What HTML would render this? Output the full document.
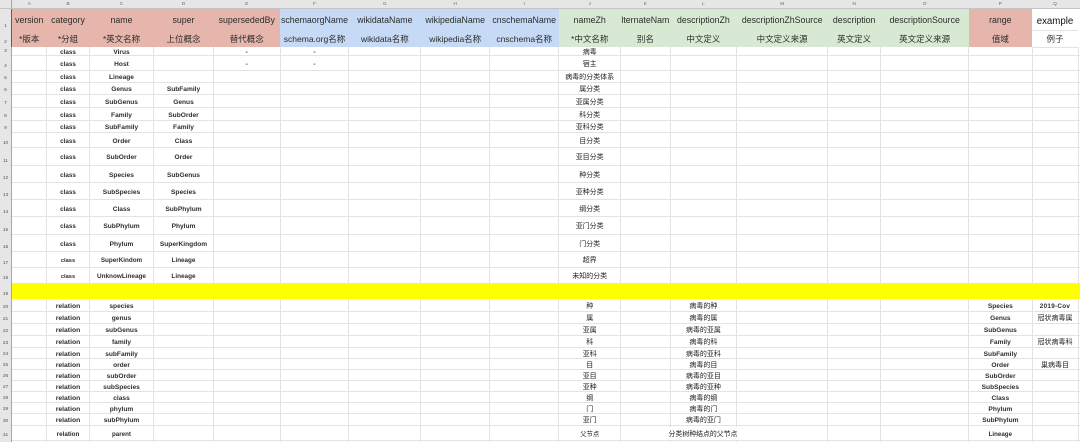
<!DOCTYPE html>
<html lang="zh">
<head>
<meta charset="utf-8">
<title>Schema sheet</title>
<style>
html,body{margin:0;padding:0;width:1080px;height:442px;overflow:hidden;background:#fff}
#s{position:relative;width:1080px;height:442px;overflow:hidden;background:#fff;font-family:"Liberation Sans","Noto Sans CJK SC",sans-serif;filter:blur(.38px)}
#s div{position:absolute}
.v{top:47px;height:395px;width:1px;background:#e3e3e3}
.h{left:12px;width:1068px;height:1px;background:#e3e3e3}
.f{top:8px;height:39px}
.r{left:0;width:1080px;text-align:center;white-space:nowrap;font-size:6.6px;font-weight:bold;color:#2e2e2e}
.r span{position:absolute;top:1px;height:100%}
.r .cj{font-weight:normal;font-size:7px;color:#1e1e1e}
.r .B{font-size:6.3px}
.A{left:12px;width:34.5px}.B{left:46.5px;width:43px}.C{left:89.5px;width:64px}.D{left:153.5px;width:60px}
.E{left:213.5px;width:66.5px}.F{left:280px;width:69px}.G{left:349px;width:71.7px}.H{left:420.7px;width:69px}
.I{left:489.7px;width:69px}.J{left:558.7px;width:62px}.K{left:620.7px;width:49.3px}.L{left:670px;width:66.7px}
.M{left:736.7px;width:91px}.N{left:827.7px;width:53px}.O{left:880.7px;width:88px}.P{left:968.7px;width:63.3px}.Q{left:1032px;width:46px}
.r .t{font-weight:normal;font-size:8.8px;color:#2c2c2c;overflow:hidden}
.r .z{font-size:8.5px}
.r span.n{left:0;width:11px;top:auto;bottom:0;height:7px;line-height:6px;text-align:center;font-size:4.8px;font-weight:normal;color:#555}
.hl{font-size:4.6px;color:#666;font-weight:normal;text-align:center;top:0;height:8px;line-height:8px}
</style>
</head>
<body>
<div id="s">
<!-- vertical grid -->
<div class="v" style="left:46px"></div><div class="v" style="left:89px"></div><div class="v" style="left:153px"></div><div class="v" style="left:213px"></div><div class="v" style="left:280px"></div><div class="v" style="left:348px"></div><div class="v" style="left:420px"></div><div class="v" style="left:489px"></div><div class="v" style="left:558px"></div><div class="v" style="left:620px"></div><div class="v" style="left:670px"></div><div class="v" style="left:736px"></div><div class="v" style="left:827px"></div><div class="v" style="left:880px"></div><div class="v" style="left:968px"></div><div class="v" style="left:1032px"></div><div class="v" style="left:1078px"></div>
<!-- horizontal grid -->
<div class="h" style="top:55px"></div><div class="h" style="top:70px"></div><div class="h" style="top:82px"></div><div class="h" style="top:94px"></div><div class="h" style="top:107px"></div><div class="h" style="top:120px"></div><div class="h" style="top:132px"></div><div class="h" style="top:147px"></div><div class="h" style="top:165px"></div><div class="h" style="top:182px"></div><div class="h" style="top:199px"></div><div class="h" style="top:216px"></div><div class="h" style="top:234px"></div><div class="h" style="top:251px"></div><div class="h" style="top:267px"></div><div class="h" style="top:311px"></div><div class="h" style="top:323px"></div><div class="h" style="top:335px"></div><div class="h" style="top:347px"></div><div class="h" style="top:358px"></div><div class="h" style="top:369px"></div><div class="h" style="top:380px"></div><div class="h" style="top:391px"></div><div class="h" style="top:402px"></div><div class="h" style="top:413px"></div><div class="h" style="top:425px"></div><div class="h" style="top:440px"></div>
<!-- header fills -->
<div class="f" style="left:12px;width:268px;background:#e6b5ab"></div>
<div class="f" style="left:280px;width:278.7px;background:#c6d9f5"></div>
<div class="f" style="left:558.7px;width:410px;background:#d8e9d3"></div>
<div class="f" style="left:968.7px;width:63.3px;background:#e6b5ab"></div>
<div class="h" style="left:1032px;width:46px;top:30px"></div>
<div style="left:1032px;width:46px;top:47px;height:1px;background:#e3e3e3"></div>
<div style="left:12px;top:283px;width:1068px;height:16px;background:#ff0"></div>
<!-- chrome -->
<div style="left:0;top:0;width:1080px;height:8px;background:#e6e6e6"></div>
<div style="left:0;top:0;width:11.5px;height:442px;background:#e6e6e6"></div>
<div style="left:11px;top:0;width:1px;height:442px;background:#a8a8a8"></div>
<div style="left:11px;top:8px;width:1px;height:39px;background:#2f7d4f"></div>
<div style="left:0;top:7.6px;width:1080px;height:.6px;background:#c4c4c4"></div>
<div class="hl A">A</div><div class="hl B">B</div><div class="hl C">C</div><div class="hl D">D</div><div class="hl E">E</div><div class="hl F">F</div><div class="hl G">G</div><div class="hl H">H</div><div class="hl I">I</div><div class="hl J">J</div><div class="hl K">K</div><div class="hl L">L</div><div class="hl M">M</div><div class="hl N">N</div><div class="hl O">O</div><div class="hl P">P</div><div class="hl Q">Q</div>
<!-- header rows -->
<div class="r" style="top:8px;height:23px;line-height:22px"><span class="n">1</span>
<span class="A t">version</span><span class="B t">category</span><span class="C t">name</span><span class="D t">super</span><span class="E t">supersededBy</span><span class="F t">schemaorgName</span><span class="G t">wikidataName</span><span class="H t">wikipediaName</span><span class="I t">cnschemaName</span><span class="J t">nameZh</span><span class="K t">lternateNam</span><span class="L t">descriptionZh</span><span class="M t">descriptionZhSource</span><span class="N t">description</span><span class="O t">descriptionSource</span><span class="P t">range</span><span class="Q t" style="color:#111;font-size:9.7px;line-height:25px">example</span></div>
<div class="r" style="top:31px;height:16px;line-height:14px"><span class="n">2</span>
<span class="A t z">*版本</span><span class="B t z">*分组</span><span class="C t z">*英文名称</span><span class="D t z">上位概念</span><span class="E t z">替代概念</span><span class="F t z">schema.org名称</span><span class="G t z">wikidata名称</span><span class="H t z">wikipedia名称</span><span class="I t z">cnschema名称</span><span class="J t z">*中文名称</span><span class="K t z">别名</span><span class="L t z">中文定义</span><span class="M t z">中文定义来源</span><span class="N t z">英文定义</span><span class="O t z">英文定义来源</span><span class="P t z">值域</span><span class="Q t z">例子</span></div>
<!-- class rows -->
<div class="r" style="top:47.5px;height:8.5px;line-height:8px"><span class="n">3</span><span class="B">class</span><span class="C">Virus</span><span class="E">-</span><span class="F">-</span><span class="J cj">病毒</span></div>
<div class="r" style="top:55.5px;height:15px;line-height:15px"><span class="n">4</span><span class="B">class</span><span class="C">Host</span><span class="E">-</span><span class="F">-</span><span class="J cj">宿主</span></div>
<div class="r" style="top:70.5px;height:12px;line-height:12px"><span class="n">5</span><span class="B">class</span><span class="C">Lineage</span><span class="J cj">病毒的分类体系</span></div>
<div class="r" style="top:82.5px;height:12px;line-height:12px"><span class="n">6</span><span class="B">class</span><span class="C">Genus</span><span class="D">SubFamily</span><span class="J cj">属分类</span></div>
<div class="r" style="top:94.5px;height:13px;line-height:13px"><span class="n">7</span><span class="B">class</span><span class="C">SubGenus</span><span class="D">Genus</span><span class="J cj">亚属分类</span></div>
<div class="r" style="top:107.5px;height:13px;line-height:13px"><span class="n">8</span><span class="B">class</span><span class="C">Family</span><span class="D">SubOrder</span><span class="J cj">科分类</span></div>
<div class="r" style="top:120.5px;height:12.5px;line-height:12.5px"><span class="n">9</span><span class="B">class</span><span class="C">SubFamily</span><span class="D">Family</span><span class="J cj">亚科分类</span></div>
<div class="r" style="top:133px;height:15px;line-height:15px"><span class="n">10</span><span class="B">class</span><span class="C">Order</span><span class="D">Class</span><span class="J cj">目分类</span></div>
<div class="r" style="top:148px;height:17.5px;line-height:17px"><span class="n">11</span><span class="B">class</span><span class="C">SubOrder</span><span class="D">Order</span><span class="J cj">亚目分类</span></div>
<div class="r" style="top:165.5px;height:17px;line-height:17px"><span class="n">12</span><span class="B">class</span><span class="C">Species</span><span class="D">SubGenus</span><span class="J cj">种分类</span></div>
<div class="r" style="top:182.5px;height:17.5px;line-height:17px"><span class="n">13</span><span class="B">class</span><span class="C">SubSpecies</span><span class="D">Species</span><span class="J cj">亚种分类</span></div>
<div class="r" style="top:200px;height:17px;line-height:17px"><span class="n">14</span><span class="B">class</span><span class="C">Class</span><span class="D">SubPhylum</span><span class="J cj">纲分类</span></div>
<div class="r" style="top:217px;height:17.5px;line-height:17px"><span class="n">15</span><span class="B">class</span><span class="C">SubPhylum</span><span class="D">Phylum</span><span class="J cj">亚门分类</span></div>
<div class="r" style="top:234.5px;height:17px;line-height:17px"><span class="n">16</span><span class="B">class</span><span class="C">Phylum</span><span class="D">SuperKingdom</span><span class="J cj">门分类</span></div>
<div class="r" style="top:251.5px;height:16px;line-height:16px;font-size:6.3px"><span class="n">17</span><span class="B" style="font-size:5.7px">class</span><span class="C">SuperKindom</span><span class="D">Lineage</span><span class="J cj">超界</span></div>
<div class="r" style="top:267.5px;height:15.5px;line-height:16px;font-size:6.4px"><span class="n">18</span><span class="B" style="font-size:5.7px">class</span><span class="C">UnknowLineage</span><span class="D">Lineage</span><span class="J cj">未知的分类</span></div>
<div class="r" style="top:283px;height:16px;line-height:16px"><span class="n">19</span></div>
<!-- relation rows -->
<div class="r" style="top:299px;height:12.5px;line-height:13px"><span class="n">20</span><span class="B" style="font-size:6.8px">relation</span><span class="C">species</span><span class="J cj">种</span><span class="L cj">病毒的种</span><span class="P">Species</span><span class="Q" style="letter-spacing:.3px;font-weight:bold;font-size:6.3px">2019-Cov</span></div>
<div class="r" style="top:311.5px;height:12px;line-height:12px"><span class="n">21</span><span class="B" style="font-size:6.8px">relation</span><span class="C">genus</span><span class="J cj">属</span><span class="L cj">病毒的属</span><span class="P">Genus</span><span class="Q cj">冠状病毒属</span></div>
<div class="r" style="top:323.5px;height:12px;line-height:12px"><span class="n">22</span><span class="B" style="font-size:6.8px">relation</span><span class="C">subGenus</span><span class="J cj">亚属</span><span class="L cj">病毒的亚属</span><span class="P">SubGenus</span></div>
<div class="r" style="top:335.5px;height:12px;line-height:12px"><span class="n">23</span><span class="B" style="font-size:6.8px">relation</span><span class="C">family</span><span class="J cj">科</span><span class="L cj">病毒的科</span><span class="P">Family</span><span class="Q cj">冠状病毒科</span></div>
<div class="r" style="top:347.5px;height:11px;line-height:11px"><span class="n">24</span><span class="B" style="font-size:6.8px">relation</span><span class="C">subFamily</span><span class="J cj">亚科</span><span class="L cj">病毒的亚科</span><span class="P">SubFamily</span></div>
<div class="r" style="top:358.5px;height:11px;line-height:11px"><span class="n">25</span><span class="B" style="font-size:6.8px">relation</span><span class="C">order</span><span class="J cj">目</span><span class="L cj">病毒的目</span><span class="P">Order</span><span class="Q cj">巢病毒目</span></div>
<div class="r" style="top:369.5px;height:11px;line-height:11px"><span class="n">26</span><span class="B" style="font-size:6.8px">relation</span><span class="C">subOrder</span><span class="J cj">亚目</span><span class="L cj">病毒的亚目</span><span class="P">SubOrder</span></div>
<div class="r" style="top:380.5px;height:11px;line-height:11px"><span class="n">27</span><span class="B" style="font-size:6.8px">relation</span><span class="C">subSpecies</span><span class="J cj">亚种</span><span class="L cj">病毒的亚种</span><span class="P">SubSpecies</span></div>
<div class="r" style="top:391.5px;height:11px;line-height:11px"><span class="n">28</span><span class="B" style="font-size:6.8px">relation</span><span class="C">class</span><span class="J cj">纲</span><span class="L cj">病毒的纲</span><span class="P">Class</span></div>
<div class="r" style="top:402.5px;height:11px;line-height:11px"><span class="n">29</span><span class="B" style="font-size:6.8px">relation</span><span class="C">phylum</span><span class="J cj">门</span><span class="L cj">病毒的门</span><span class="P">Phylum</span></div>
<div class="r" style="top:413.5px;height:12px;line-height:12px"><span class="n">30</span><span class="B" style="font-size:6.8px">relation</span><span class="C">subPhylum</span><span class="J cj">亚门</span><span class="L cj">病毒的亚门</span><span class="P">SubPhylum</span></div>
<div class="r" style="top:425.5px;height:14.5px;line-height:15px;font-size:6.2px"><span class="n">31</span><span class="B">relation</span><span class="C">parent</span><span class="J cj" style="font-size:6.4px">父节点</span><span class="cj" style="left:664px;width:78px;height:13px;background:#fff;font-size:6.9px">分类树种结点的父节点</span><span class="P">Lineage</span></div>
</div>
</body>
</html>
